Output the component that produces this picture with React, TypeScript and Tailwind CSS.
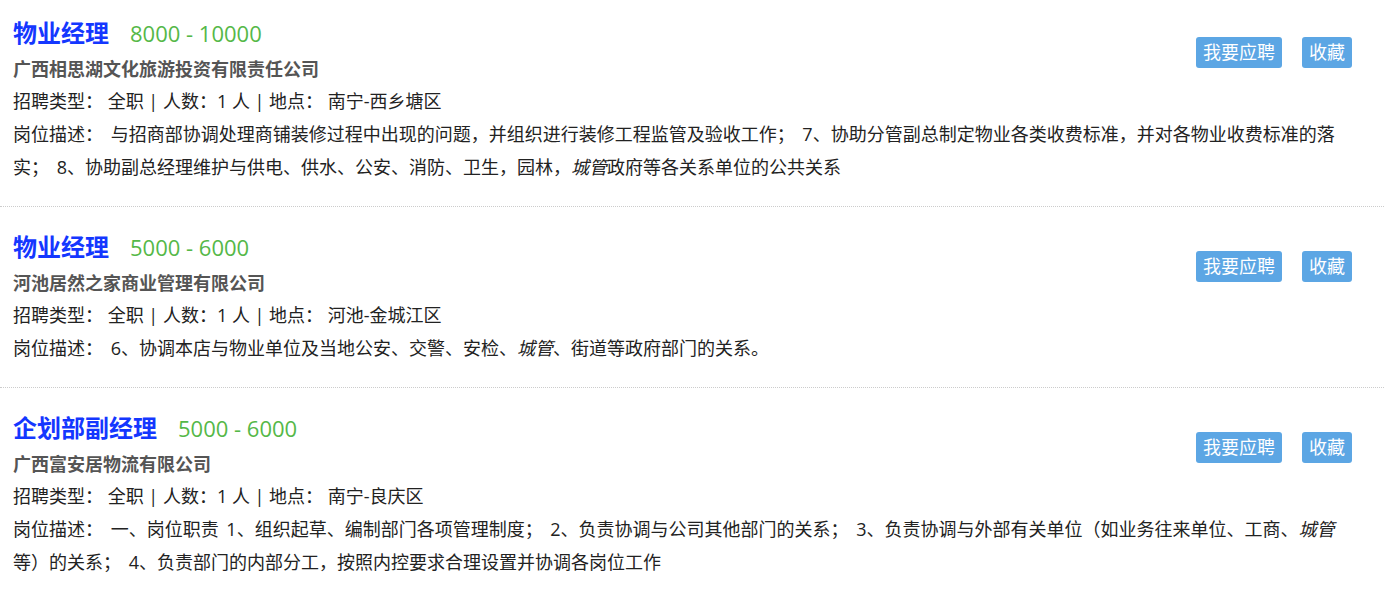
import React from "react";

type Job = {
  title: string;
  salary: string;
  company: string;
  place: string;
  desc: React.ReactNode;
};

const jobs: Job[] = [
  {
    title: "物业经理",
    salary: "8000 - 10000",
    company: "广西相思湖文化旅游投资有限责任公司",
    place: "南宁-西乡塘区",
    desc: (
      <>
        与招商部协调处理商铺装修过程中出现的问题，并组织进行装修工程监管及验收工作； 7、协助分管副总制定物业各类收费标准，并对各物业收费标准的落实； 8、协助副总经理维护与供电、供水、公安、消防、卫生，园林，
        <em>城管</em>政府等各关系单位的公共关系
      </>
    ),
  },
  {
    title: "物业经理",
    salary: "5000 - 6000",
    company: "河池居然之家商业管理有限公司",
    place: "河池-金城江区",
    desc: (
      <>
        6、协调本店与物业单位及当地公安、交警、安检、<em>城管</em>、街道等政府部门的关系。
      </>
    ),
  },
  {
    title: "企划部副经理",
    salary: "5000 - 6000",
    company: "广西富安居物流有限公司",
    place: "南宁-良庆区",
    desc: (
      <>
        一、岗位职责 1、组织起草、编制部门各项管理制度； 2、负责协调与公司其他部门的关系； 3、负责协调与外部有关单位（如业务往来单位、工商、
        <em>城管</em>等）的关系； 4、负责部门的内部分工，按照内控要求合理设置并协调各岗位工作
      </>
    ),
  },
];

export default function App() {
  return (
    <div
      className="bg-white text-[#222]"
      style={{ fontFamily: '"Open Sans", "Noto Sans CJK SC", sans-serif' }}
    >
      {jobs.map((job, i) => (
        <div
          key={i}
          className={`pl-[13px] pr-[32px] pb-[22px] ${i === 0 ? "pt-[14px]" : "pt-[21px]"} ${i < jobs.length - 1 ? "border-b border-dotted border-[#ccc]" : ""}`}
        >
          <div className="flex items-center justify-between">
            <div>
              <div className="flex items-center h-[38px]">
                <span className="text-[24px] font-bold text-[#1437ff]">{job.title}</span>
                <span className="text-[22px] text-[#55b848] ml-[21px]">{job.salary}</span>
              </div>
              <div className="text-[18px] font-bold text-[#555] leading-[32px] mt-[1px]">
                {job.company}
              </div>
            </div>
            <div className="flex gap-[20px] mt-[6px]">
              <button className="bg-[#5ca6e4] text-white text-[18px] leading-[31px] px-[7px] rounded-[3px]">
                我要应聘
              </button>
              <button className="bg-[#5ca6e4] text-white text-[18px] leading-[31px] px-[7px] rounded-[3px]">
                收藏
              </button>
            </div>
          </div>
          <div className="text-[18px] leading-[33px]">
            招聘类型： 全职 | 人数：1 人 | 地点： {job.place}
          </div>
          <div className="text-[18px] leading-[33px] [word-spacing:3px]">
            岗位描述： {job.desc}
          </div>
        </div>
      ))}
    </div>
  );
}
